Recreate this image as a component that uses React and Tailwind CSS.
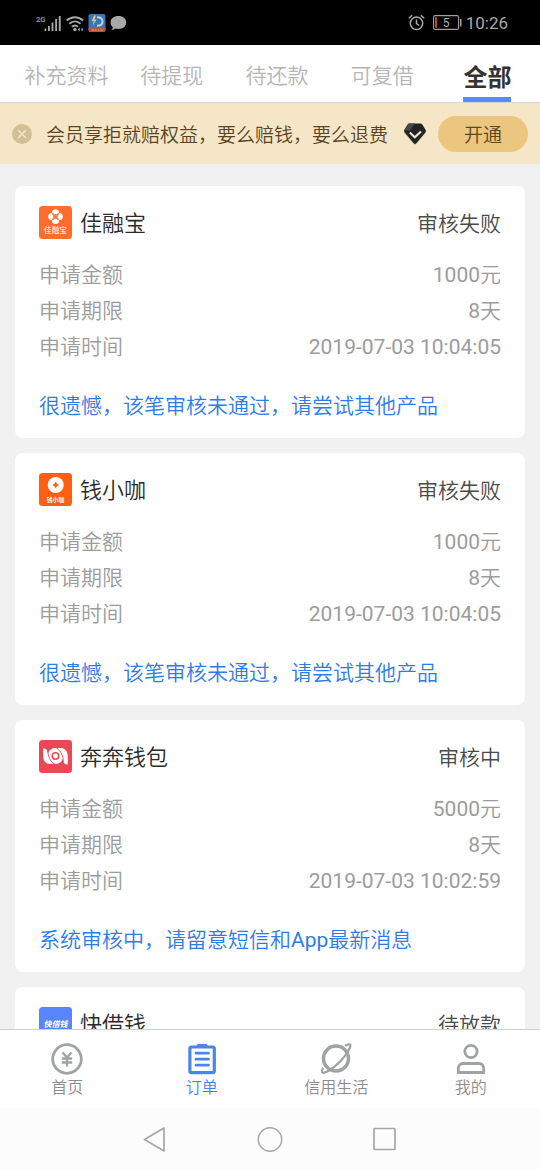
import React from "react";

const TABS = ["补充资料", "待提现", "待还款", "可复借", "全部"];

const ORDERS = [
  {
    name: "佳融宝",
    logo: "jiarongbao",
    status: "审核失败",
    amount: "1000元",
    term: "8天",
    time: "2019-07-03 10:04:05",
    note: "很遗憾，该笔审核未通过，请尝试其他产品",
  },
  {
    name: "钱小咖",
    logo: "qianxiaoka",
    status: "审核失败",
    amount: "1000元",
    term: "8天",
    time: "2019-07-03 10:04:05",
    note: "很遗憾，该笔审核未通过，请尝试其他产品",
  },
  {
    name: "奔奔钱包",
    logo: "benben",
    status: "审核中",
    amount: "5000元",
    term: "8天",
    time: "2019-07-03 10:02:59",
    note: (
      <>
        系统审核中，请留意短信和<span className="font-normal">App</span>最新消息
      </>
    ),
  },
  {
    name: "快借钱",
    logo: "kuaijieqian",
    status: "待放款",
  },
];

const LOGO_TEXT = "font-['Noto_Sans_CJK_SC',sans-serif]";

function Logo({ kind }) {
  if (kind === "jiarongbao") {
    return (
      <svg className="size-[33px] shrink-0" viewBox="0 0 33 33" aria-hidden="true">
        <rect width="33" height="33" rx="3.5" fill="#ff6d2c" />
        <g fill="#fff">
          <circle cx="16.5" cy="6.8" r="3.5" />
          <circle cx="16.5" cy="14.4" r="3.5" />
          <circle cx="12.7" cy="10.6" r="3.5" />
          <circle cx="20.3" cy="10.6" r="3.5" />
        </g>
        <path d="M13.3 7.4l6.4 6.4M19.7 7.4l-6.4 6.4" stroke="#ff6d2c" strokeWidth="1.5" />
        <path d="M16.5 8v5.200M13.900 10.600h5.200" stroke="#ff6d2c" strokeWidth="0.800" />
        <text x="16.5" y="26.8" textAnchor="middle" fontSize="7.6" fill="#fff" className={LOGO_TEXT}>佳融宝</text>
      </svg>
    );
  }
  if (kind === "qianxiaoka") {
    return (
      <svg className="size-[33px] shrink-0" viewBox="0 0 33 33" aria-hidden="true">
        <rect width="33" height="33" rx="3.5" fill="#ff5f12" />
        <circle cx="16.7" cy="12" r="8" fill="#fff" />
        <path d="M16.7 9.2l1 1.8 1.8 1-1.8 1-1 1.8-1-1.8-1.8-1 1.8-1z" fill="#ff5f12" stroke="#ff5f12" strokeWidth="0.8" />
        <text x="16.5" y="28.6" textAnchor="middle" fontSize="5.8" fontWeight="700" fill="#fff" className={LOGO_TEXT}>钱小咖</text>
      </svg>
    );
  }
  if (kind === "benben") {
    return (
      <svg className="size-[33px] shrink-0" viewBox="0 0 33 33" aria-hidden="true">
        <rect width="33" height="33" rx="3.5" fill="#e94854" />
        <path d="M4.200 8.500c2.500-.2 4.100 1 4.500 4 .4 4.500 1.800 8 5.600 11-6 1.500-10-1-10.100-7.500z" fill="#fff" />
        <path d="M28.800 24.500c-2.500.2-4.100-1-4.500-4-.4-4.500-1.800-8.500-5.600-12 6-1.500 10 1.500 10.100 8z" fill="#fff" />
        <circle cx="16.500" cy="16" r="6" fill="none" stroke="#fff" strokeWidth="4" />
        <circle cx="16.500" cy="16" r="2.400" fill="#fff" />
        <path d="M8.900 10c0 6 1.800 11.200 6.600 13.900M24.300 22c0-6-2-10.800-6.800-13.900" fill="none" stroke="#e94854" strokeWidth="0.900" />
      </svg>
    );
  }
  return (
    <svg className="size-[33px] shrink-0" viewBox="0 0 33 33" aria-hidden="true">
      <rect width="33" height="33" rx="3.5" fill="#5785fb" />
      <text x="16.5" y="19.600" textAnchor="middle" fontSize="8" fontWeight="700" fontStyle="italic" fill="#fff" className={LOGO_TEXT}>快借钱</text>
    </svg>
  );
}

function StatusBar() {
  return (
    <div className="flex h-[45px] shrink-0 items-center justify-between bg-black pr-8 pl-9 text-[#a8a8a8]">
      <div className="flex items-center gap-1">
        <svg className="h-[18px] w-[26px]" viewBox="0 0 26 18" fill="currentColor" aria-hidden="true">
          <text x="0" y="7.500" fontSize="7.500" fontWeight="500" className="font-['Roboto',sans-serif]">2G</text>
          <path d="M8.500 14.500h1.800V17H8.500zM12 12h1.800v5H12zM15.600 8.500h1.800V17h-1.800zM19.200 5H21v12h-1.800zM22.800 2h1.900v15h-1.900z" />
        </svg>
        <svg className="h-[18px] w-[18px]" viewBox="0 0 18 18" fill="none" stroke="currentColor" strokeWidth="2" aria-hidden="true">
          <path d="M.7 6.500c4.800-4.400 11.600-4.400 16.400 0M3.300 9.800c3.400-3 7.800-3 11.200 0M5.900 12.700c1.900-1.600 4.100-1.600 6 0" />
          <circle cx="8.900" cy="15.500" r="1.700" fill="currentColor" stroke="none" />
          <path d="M11.800 15.500l2-2v4zM17.500 15.500l-2-2v4z" fill="currentColor" stroke="none" />
        </svg>
        <svg className="size-[18px]" viewBox="0 0 18 18" aria-hidden="true">
          <rect x="0.500" width="17" height="18" rx="2" fill="#3478b8" />
          <path d="M.5 14h17v2a2 2 0 0 1-2 2h-13a2 2 0 0 1-2-2z" fill="#b8553a" />
          <path d="M9 3.200c4 0 5.500 1.700 5.500 4.200 0 2.700-1.800 4.300-5.500 4.300" fill="none" stroke="#c3cdd5" strokeWidth="2" />
          <path d="M6 1.500L3.800 7h2L4.500 12l4-6.500H6.400L8 1.500z" fill="#dcc98c" />
          <path d="M4 16h2M7 16h1.500M10 16h1M12.500 16h2" stroke="#d8b0a0" strokeWidth="1.200" />
        </svg>
        <svg className="h-[18px] w-[17px]" viewBox="0 0 17 18" fill="currentColor" aria-hidden="true">
          <path d="M8.400 2C3.900 2 .6 4.700.6 8.400c0 2 .9 3.700 2.300 4.800-.2 1.100-.8 2-1.700 2.700 1.700.1 3.200-.5 4.300-1.400.9.200 1.900.4 2.900.4 4.600 0 7.800-2.800 7.800-6.500S13 2 8.400 2z" />
        </svg>
      </div>
      <div className="flex items-center gap-2">
        <svg className="size-[17px]" viewBox="0 0 17 17" fill="none" stroke="currentColor" strokeWidth="1.500" aria-hidden="true">
          <circle cx="8.500" cy="9.300" r="6.200" />
          <path d="M8.500 5.500v4l2.700 2M.8 4.300L4.200 1.200M16.200 4.300l-3.400-3.100" />
        </svg>
        <svg className="h-[15px] w-[29px]" viewBox="0 0 29 15" aria-hidden="true">
          <rect x="0.600" y="0.600" width="25" height="13.800" rx="1.500" fill="none" stroke="#a0a0a0" strokeWidth="1.100" />
          <path d="M2 2.200h2v10.600H2z" fill="#c8402e" />
          <path d="M27 4h1.500v7.500H27z" fill="#a0a0a0" />
          <text x="13" y="12" textAnchor="middle" fontSize="12" fill="#b0b0b0" className="font-['Roboto',sans-serif]">5</text>
        </svg>
        <span className="-ml-1 text-[17px] leading-5">10:26</span>
      </div>
    </div>
  );
}

function TabBar() {
  return (
    <nav className="grid h-[58px] shrink-0 grid-cols-5 border-b border-[#d6d6d6] bg-white pl-[14px]">
      {TABS.map((tab) =>
        tab === "全部" ? (
          <button key={tab} type="button" aria-current="page" className="flex flex-col items-center justify-end text-2xl font-bold text-[#333]">
            <span className="leading-[38px]">{tab}</span>
            <span className="h-[5px] w-12 bg-[#4f8ff7]" />
          </button>
        ) : (
          <button key={tab} type="button" className="pt-1.5 text-[21px] font-[350] text-[#b5b5b5]">
            {tab}
          </button>
        )
      )}
    </nav>
  );
}

function MemberBanner() {
  return (
    <div className="flex h-[61px] shrink-0 items-center bg-[#f5e6c8] px-3 text-[#5a4422]">
      <button type="button" aria-label="关闭" className="mr-[14px] shrink-0">
        <svg className="size-5" viewBox="0 0 20 20" aria-hidden="true">
          <circle cx="10" cy="10" r="10" fill="#d2bf93" />
          <path d="M6 6l8 8M14 6l-8 8" stroke="#f5e6c8" strokeWidth="1.400" />
        </svg>
      </button>
      <p className="flex-1 pt-1.5 text-[19px] font-[350] whitespace-nowrap">会员享拒就赔权益，要么赔钱，要么退费</p>
      <svg className="mr-[11px] h-6 w-6 shrink-0" viewBox="0 0 24 24" aria-hidden="true">
        <path d="M6 3.500h12l5 7.500-9.800 11.500a1.600 1.600 0 0 1-2.400 0L1 11z" fill="#b9a98a" opacity="0.500" />
        <path d="M6.300 1.500h11.400a2 2 0 0 1 1.600.9l3.400 5.500a2 2 0 0 1-.2 2.300l-9 10.700a2 2 0 0 1-3 0L1.500 10.200a2 2 0 0 1-.2-2.300l3.400-5.500a2 2 0 0 1 1.600-.9z" fill="#232225" />
        <path d="M6.300 1.500H12L6.500 9 1.300 7.900l3.400-5.500a2 2 0 0 1 1.600-.9z" fill="#47464a" />
        <path d="M6.800 10.500l5 4.800 6.200-5.800" fill="none" stroke="#f1e5cf" strokeWidth="2" />
      </svg>
      <button type="button" className="h-9 w-[90px] shrink-0 rounded-full bg-[#eac67f] pt-1.5 text-[19px] font-[350]">
        开通
      </button>
    </div>
  );
}

function Row({ label, value }) {
  return (
    <div className="flex justify-between">
      <dt className="font-[350]">{label}</dt>
      <dd>
        {value.replace(/[元天]$/, "")}
        <span className="font-[350]">{value.match(/[元天]$/)?.[0]}</span>
      </dd>
    </div>
  );
}

function OrderCard({ order }) {
  return (
    <article className="rounded-lg bg-white px-6 pt-5 pb-[14px]">
      <header className="flex h-[33px] items-center leading-8">
        <Logo kind={order.logo} />
        <h2 className="ml-2 flex-1 pt-0.5 text-[22px] font-[350] text-[#2a2a2a]">{order.name}</h2>
        <span className="pt-0.5 text-[21px] font-[350] text-[#4a4a4a]">{order.status}</span>
      </header>
      {order.note && (
        <>
          <dl className="mt-[18px] text-[21px] leading-9 text-[#9c9c9c]">
            <Row label="申请金额" value={order.amount} />
            <Row label="申请期限" value={order.term} />
            <Row label="申请时间" value={order.time} />
          </dl>
          <p className="mt-[23px] text-[21px] leading-9 font-[350] text-[#2f7be6]">{order.note}</p>
        </>
      )}
    </article>
  );
}

function NavItem({ label, active, children }) {
  return (
    <a href="#" aria-current={active ? "page" : undefined} className={active ? "flex flex-col items-center text-[#4a86e8]" : "flex flex-col items-center text-[#a0a3a3]"}>
      <svg className="size-8" viewBox="0 0 32 32" fill="none" stroke="currentColor" strokeWidth="2.800" aria-hidden="true">
        {children}
      </svg>
      <span className={active ? "text-base leading-[26px] font-[350] text-[#3f82e8]" : "text-base leading-[26px] font-[350] text-[#8c8c8c]"}>{label}</span>
    </a>
  );
}

function BottomNav() {
  return (
    <nav className="grid h-[79px] shrink-0 grid-cols-4 border-t border-[#d0d0d0] bg-white pt-[13px] pr-[2px]">
      <NavItem label="首页">
        <circle cx="16" cy="16" r="14.300" />
        <path d="M11.500 9.500l4.500 5 4.500-5M16 14.500v9M10.800 15.500h10.400M10.800 19.500h10.400" strokeWidth="2.300" />
      </NavItem>
      <NavItem label="订单" active>
        <rect x="3.900" y="4" width="24.400" height="25.600" rx="1.500" strokeWidth="3.200" />
        <path d="M10 4.200l1.500-3.200h9.200l1.500 3.200z" fill="currentColor" stroke="none" />
        <path d="M10 10.200h12.500M10 16.200h12.500M10 22.200h12.500" strokeWidth="2.800" strokeLinecap="round" />
      </NavItem>
      <NavItem label="信用生活">
        <circle cx="16" cy="15.500" r="12.500" strokeWidth="3.500" />
        <path d="M25 2.800c2.500-1.400 5-1.800 5.300-.9.700 2-3.800 10-10.200 16.600-7.600 7.800-15.800 12.700-17.700 10.900-.6-.7-.3-2.800.6-4.700" strokeWidth="2.300" />
      </NavItem>
      <NavItem label="我的">
        <circle cx="16" cy="8.500" r="6.200" />
        <path d="M3.300 29.500v-4c0-3 1.900-5 4.700-5h16c2.800 0 4.700 2 4.700 5v4z" />
      </NavItem>
    </nav>
  );
}

function SystemBar() {
  return (
    <div className="flex h-[62px] shrink-0 items-center justify-center gap-[89px] bg-[#fcfcfc] text-[#a6a6a6]">
      <button type="button" aria-label="返回">
        <svg className="size-[26px]" viewBox="0 0 26 26" fill="none" stroke="currentColor" strokeWidth="1.700" strokeLinejoin="round" aria-hidden="true">
          <path d="M2.500 13.500L22 2v23z" />
        </svg>
      </button>
      <button type="button" aria-label="主屏幕">
        <svg className="size-[26px]" viewBox="0 0 26 26" fill="none" stroke="currentColor" strokeWidth="1.500" aria-hidden="true">
          <circle cx="13" cy="13.500" r="11.700" />
        </svg>
      </button>
      <button type="button" aria-label="最近任务">
        <svg className="size-[26px]" viewBox="0 0 26 26" fill="none" stroke="currentColor" strokeWidth="1.700" aria-hidden="true">
          <rect x="2" y="2.500" width="21" height="21" rx="0.800" />
        </svg>
      </button>
    </div>
  );
}

export default function App() {
  return (
    <div className="flex h-screen flex-col bg-[#f1f1f1] font-['Roboto','Noto_Sans_CJK_SC',sans-serif]">
      <StatusBar />
      <TabBar />
      <MemberBanner />
      <main className="flex min-h-0 flex-1 flex-col gap-[15px] overflow-y-auto px-[15px] pt-[22px] [scrollbar-width:none]">
        {ORDERS.map((order) => (
          <OrderCard key={order.name} order={order} />
        ))}
      </main>
      <BottomNav />
      <SystemBar />
    </div>
  );
}
